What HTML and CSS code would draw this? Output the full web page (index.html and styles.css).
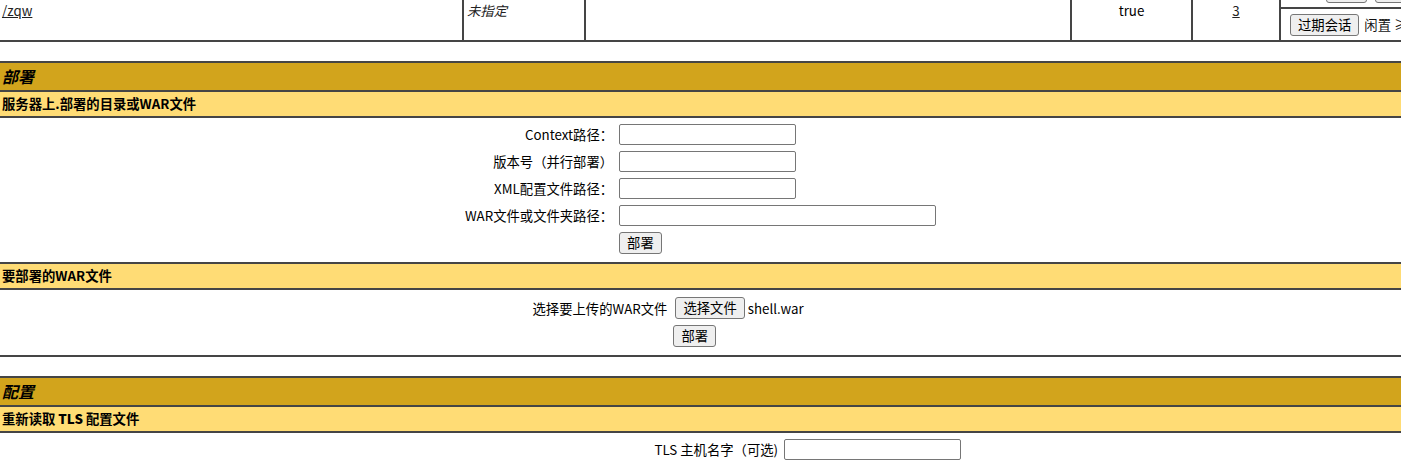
FILE: index.html
```html
<!DOCTYPE html>
<html lang="zh-CN">
<head>
<meta charset="utf-8">
<title>/manager</title>
<link rel="stylesheet" href="styles.css">
</head>
<body>
<div class="page">
  <div class="apps">
    <div class="cell cell-left"><a class="link" href="#">/zqw</a></div>
    <div class="cell cell-left"><i>未指定</i></div>
    <div class="cell cell-left"></div>
    <div class="cell cell-center">true</div>
    <div class="cell cell-center"><a class="link" href="#">3</a></div>
    <div class="cell cmds">
      <div class="cmd-top">
        <button class="btn btn-start" type="button" aria-label="重新加载"></button>
        <button class="btn btn-stop" type="button" aria-label="卸载"></button>
      </div>
      <div class="cmd-bottom">
        <button class="btn" type="button">过期会话</button>
        <span class="idle">闲置 ≥</span>
      </div>
    </div>
  </div>

  <section class="panel">
    <div class="title">部署</div>
    <div class="header">服务器上.部署的目录或WAR文件</div>
    <div class="body body-deploy">
      <form class="form-grid">
        <label class="lbl">Context路径：</label>
        <span class="fld"><input class="txt" type="text"></span>
        <label class="lbl">版本号（并行部署）</label>
        <span class="fld"><input class="txt" type="text"></span>
        <label class="lbl">XML配置文件路径：</label>
        <span class="fld"><input class="txt" type="text"></span>
        <label class="lbl">WAR文件或文件夹路径：</label>
        <span class="fld"><input class="txt txt-wide" type="text"></span>
        <span class="lbl"></span>
        <span class="fld"><button class="btn" type="button">部署</button></span>
      </form>
    </div>
    <div class="header">要部署的WAR文件</div>
    <div class="body body-upload">
      <form class="form-grid">
        <label class="lbl">选择要上传的WAR文件</label>
        <span class="fld"><span class="file"><button class="btn btn-file" type="button">选择文件</button><span class="file-name">shell.war</span></span></span>
        <span class="lbl"></span>
        <span class="fld"><button class="btn" type="button">部署</button></span>
      </form>
    </div>
  </section>

  <section class="panel">
    <div class="title">配置</div>
    <div class="header">重新读取 <b>TLS</b> 配置文件</div>
    <div class="body body-tls">
      <form class="tls-grid">
        <label class="lbl">TLS 主机名字（可选)</label>
        <span class="fld"><input class="txt" type="text"></span>
        <span class="lbl"></span>
        <span class="fld"><button class="btn" type="button">重新读取</button></span>
      </form>
    </div>
  </section>
</div>
</body>
</html>
```

FILE: styles.css
```css
html, body {
  margin: 0;
  padding: 0;
  background: #ffffff;
}

body {
  width: 1401px;
  height: 464px;
  overflow: hidden;
  font-family: "Noto Sans CJK SC", "Noto Sans", sans-serif;
  font-size: 13.333px;
  color: #000000;
}

.page {
  display: flex;
  flex-direction: column;
}

/* ---------- application row ---------- */
.apps {
  display: grid;
  grid-template-columns: 464px 122px 486px 121px 88px 1fr;
  height: 42px;
  border-bottom: 2px solid #454545;
  box-sizing: border-box;
}

.cell {
  border-right: 2px solid #454545;
  padding: 2px 3px 0;
  line-height: 18px;
  white-space: nowrap;
  overflow: hidden;
}

.cell:first-child {
  padding-left: 2px;
}

.cell-center {
  text-align: center;
}

.cell i {
  font-style: italic;
  color: #222;
}

.link {
  color: #222222;
  text-decoration: underline;
}

.cmds {
  border-right: none;
  padding: 0;
  display: flex;
  flex-direction: column;
}

.cmd-top {
  height: 7px;
  border-bottom: 2px solid #454545;
  display: flex;
  align-items: flex-end;
  gap: 8px;
  padding-left: 45px;
  overflow: hidden;
}

.cmd-top .btn {
  margin-bottom: 4px;
  flex: none;
}

.cmd-bottom {
  flex: 1;
  display: flex;
  align-items: center;
  gap: 5px;
  padding-left: 9px;
  white-space: nowrap;
}

.idle {
  color: #111;
}

/* ---------- buttons & inputs ---------- */
.btn {
  height: 22px;
  box-sizing: border-box;
  padding: 0 7px;
  font-family: inherit;
  font-size: 13.333px;
  line-height: 18px;
  color: #000;
  background: #efefef;
  border: 1px solid #767676;
  border-radius: 3px;
}

.btn-start,
.btn-stop {
  width: 41px;
}

.btn-file {
  margin-left: 2px;
}

.txt {
  display: block;
  width: 177px;
  height: 21px;
  box-sizing: border-box;
  border: 1px solid #767676;
  border-radius: 2px;
  padding: 1px 2px;
  font-family: inherit;
  font-size: 13.333px;
  background: #fff;
}

.txt-wide {
  width: 317px;
}

/* ---------- panels ---------- */
.panel {
  margin-top: 19px;
  border-top: 2px solid #454545;
  border-bottom: 2px solid #454545;
}

.title {
  background: #d2a41c;
  font-size: 16px;
  font-weight: bold;
  font-style: italic;
  line-height: 21px;
  padding: 3px 2px;
}

.header {
  background: #ffdc75;
  border-top: 2px solid #454545;
  font-weight: bold;
  line-height: 18px;
  padding: 3px 2px;
}

.body {
  border-top: 2px solid #454545;
}

.body-deploy {
  padding: 3px 0 5px;
}

.body-upload {
  padding: 4px 0 5px;
}

.body-tls {
  padding: 3px 0 5px;
}

.form-grid {
  margin: 0;
  display: grid;
  grid-template-columns: auto auto;
  justify-content: center;
  align-items: center;
}

.tls-grid {
  margin: 0;
  display: grid;
  grid-template-columns: 55.75% auto;
  align-items: center;
}

.lbl {
  padding: 3px;
  text-align: right;
  white-space: nowrap;
}

.fld {
  padding: 3px;
  display: flex;
  align-items: center;
}

.file {
  width: 195px;
  display: flex;
  align-items: center;
  gap: 3px;
}

.file-name {
  white-space: nowrap;
}
```
